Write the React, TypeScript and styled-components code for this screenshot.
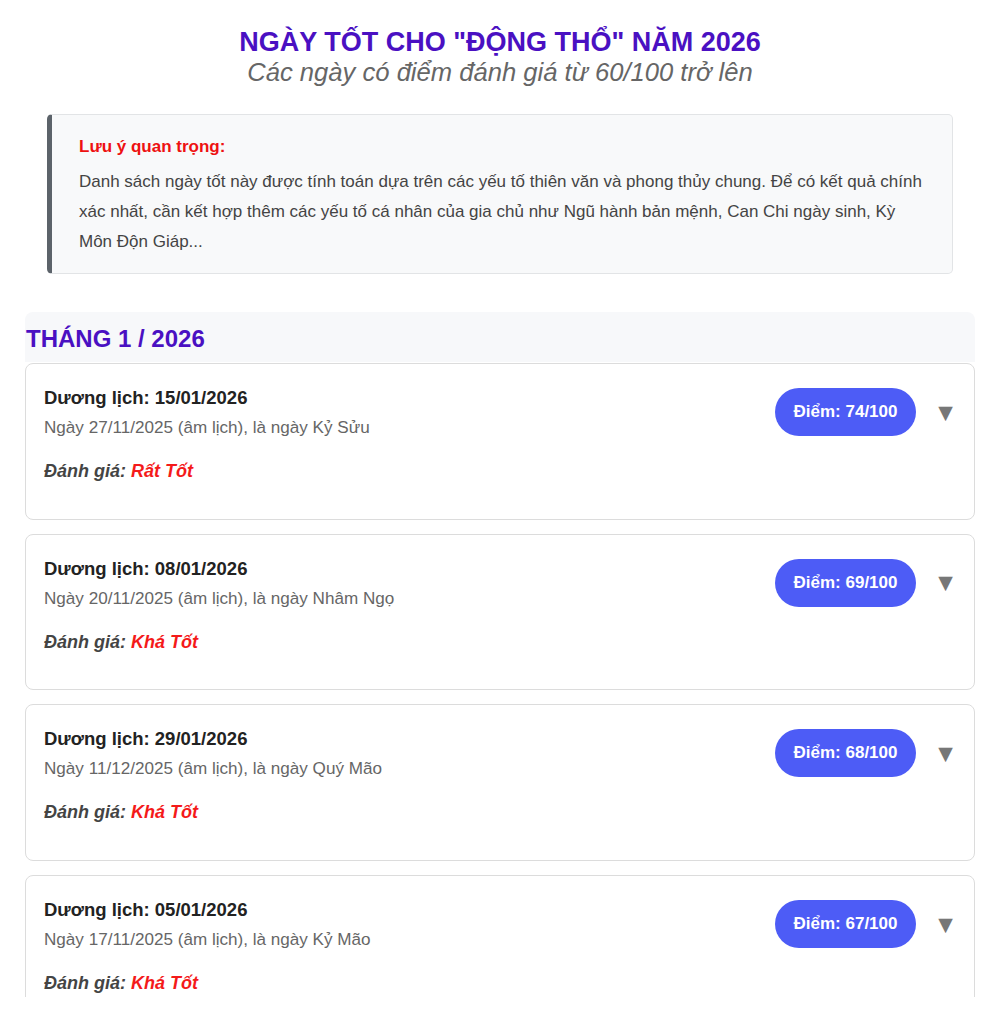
import React from "react";
import styled, { createGlobalStyle } from "styled-components";

const GlobalStyle = createGlobalStyle`
  html, body { margin: 0; padding: 0; background: #ffffff; }
  body { font-family: "Liberation Sans", Arial, sans-serif; }
`;

const Viewport = styled.div`
  height: 997px;
  overflow: hidden;
  background: #fff;
`;

const Container = styled.main`
  width: 950px;
  margin: 0 auto;
  padding-top: 26px;
`;

const Header = styled.header`
  text-align: center;
`;

const Title = styled.h1`
  margin: 0;
  font-size: 27px;
  line-height: 32px;
  font-weight: 700;
  color: #4a10c2;
`;

const Subtitle = styled.p`
  margin: -1px 0 0;
  font-size: 25.6px;
  line-height: 30px;
  font-style: italic;
  color: #666;
`;

const Note = styled.section`
  margin: 27px 22px 38px;
  padding: 20px 26px 16px 27px;
  background: #f8f9fa;
  border: 1px solid #e2e4e6;
  border-left: 5px solid #5c636a;
  border-radius: 5px;
`;

const NoteLabel = styled.div`
  font-size: 17px;
  line-height: 24px;
  font-weight: 700;
  color: #ee1111;
  margin-bottom: 8px;
`;

const NoteText = styled.p`
  margin: 0;
  font-size: 17px;
  line-height: 30px;
  color: #444;
`;

const MonthHeader = styled.h2`
  margin: 0;
  padding: 12px 1px 8px;
  background: #f7f8fa;
  border-radius: 8px 8px 0 0;
  font-size: 24px;
  line-height: 30px;
  font-weight: 700;
  color: #4a10c2;
`;

const CardList = styled.div`
  display: flex;
  flex-direction: column;
  gap: 14px;
  margin-top: 1px;
`;

const Card = styled.article`
  display: flex;
  align-items: flex-start;
  justify-content: space-between;
  padding: 22px 20px 35.7px 18px;
  border: 1px solid #dcdcdc;
  border-radius: 8px;
  background: #fff;
`;

const Info = styled.div`
  display: flex;
  flex-direction: column;
`;

const SolarDate = styled.div`
  font-size: 18.5px;
  line-height: 24px;
  font-weight: 700;
  color: #222;
`;

const LunarDate = styled.div`
  margin-top: 6px;
  font-size: 17.1px;
  line-height: 24px;
  color: #666;
`;

const Rating = styled.div`
  margin-top: 19px;
  font-size: 18px;
  line-height: 24px;
  font-weight: 700;
  font-style: italic;
  color: #444;
`;

const RatingValue = styled.span`
  color: #f41a1a;
`;

const Side = styled.div`
  display: flex;
  align-items: center;
  gap: 21px;
  margin-top: 2px;
`;

const ScoreBadge = styled.div`
  width: 141px;
  height: 48px;
  border-radius: 24px;
  background: #4d5cf6;
  color: #fff;
  font-size: 17px;
  font-weight: 700;
  display: flex;
  align-items: center;
  justify-content: center;
`;

const Toggle = styled.span`
  color: #777;
  font-size: 19px;
  line-height: 1;
  width: 17px;
  text-align: center;
  font-family: "DejaVu Sans", sans-serif;
`;

type Day = { solar: string; lunar: string; can: string; score: number; rating: string };

const days: Day[] = [
  { solar: "15/01/2026", lunar: "27/11/2025", can: "Kỷ Sửu", score: 74, rating: "Rất Tốt" },
  { solar: "08/01/2026", lunar: "20/11/2025", can: "Nhâm Ngọ", score: 69, rating: "Khá Tốt" },
  { solar: "29/01/2026", lunar: "11/12/2025", can: "Quý Mão", score: 68, rating: "Khá Tốt" },
  { solar: "05/01/2026", lunar: "17/11/2025", can: "Kỷ Mão", score: 67, rating: "Khá Tốt" },
];

export default function App() {
  return (
    <Viewport>
      <GlobalStyle />
      <Container>
        <Header>
          <Title>NGÀY TỐT CHO "ĐỘNG THỔ" NĂM 2026</Title>
          <Subtitle>Các ngày có điểm đánh giá từ 60/100 trở lên</Subtitle>
        </Header>
        <Note>
          <NoteLabel>Lưu ý quan trọng:</NoteLabel>
          <NoteText>
            Danh sách ngày tốt này được tính toán dựa trên các yếu tố thiên văn và phong thủy chung. Để có kết quả chính
            xác nhất, cần kết hợp thêm các yếu tố cá nhân của gia chủ như Ngũ hành bản mệnh, Can Chi ngày sinh, Kỳ
            Môn Độn Giáp...
          </NoteText>
        </Note>
        <MonthHeader>THÁNG 1 / 2026</MonthHeader>
        <CardList>
          {days.map((d) => (
            <Card key={d.solar}>
              <Info>
                <SolarDate>Dương lịch: {d.solar}</SolarDate>
                <LunarDate>
                  Ngày {d.lunar} (âm lịch), là ngày {d.can}
                </LunarDate>
                <Rating>
                  Đánh giá: <RatingValue>{d.rating}</RatingValue>
                </Rating>
              </Info>
              <Side>
                <ScoreBadge>Điểm: {d.score}/100</ScoreBadge>
                <Toggle>▼</Toggle>
              </Side>
            </Card>
          ))}
        </CardList>
      </Container>
    </Viewport>
  );
}
